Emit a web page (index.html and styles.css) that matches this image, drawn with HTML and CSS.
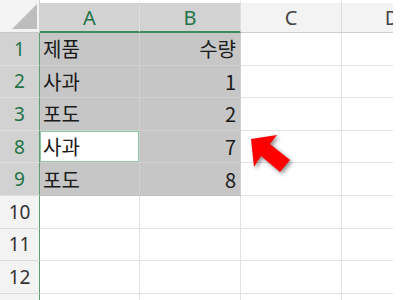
FILE: index.html
```html
<!DOCTYPE html>
<html lang="ko">
<head>
    <meta charset="UTF-8">
    <title>Sheet</title>
    <link rel="stylesheet" href="styles.css">
</head>
<body>

<div class="sheet">
    <div class="corner"></div>
    <div class="ch on">A</div>
    <div class="ch on">B</div>
    <div class="ch">C</div>
    <div class="ch">D</div>

    <div class="rh on">1</div>
    <div class="cell sel">제품</div>
    <div class="cell sel num">수량</div>
    <div class="cell"></div>
    <div class="cell"></div>

    <div class="rh on">2</div>
    <div class="cell sel">사과</div>
    <div class="cell sel num">1</div>
    <div class="cell"></div>
    <div class="cell"></div>

    <div class="rh on">3</div>
    <div class="cell sel">포도</div>
    <div class="cell sel num">2</div>
    <div class="cell"></div>
    <div class="cell"></div>

    <div class="rh on">8</div>
    <div class="cell sel active">사과</div>
    <div class="cell sel num">7</div>
    <div class="cell"></div>
    <div class="cell"></div>

    <div class="rh on">9</div>
    <div class="cell sel last">포도</div>
    <div class="cell sel num last">8</div>
    <div class="cell"></div>
    <div class="cell"></div>

    <div class="rh">10</div>
    <div class="cell"></div>
    <div class="cell"></div>
    <div class="cell"></div>
    <div class="cell"></div>

    <div class="rh">11</div>
    <div class="cell"></div>
    <div class="cell"></div>
    <div class="cell"></div>
    <div class="cell"></div>

    <div class="rh">12</div>
    <div class="cell"></div>
    <div class="cell"></div>
    <div class="cell"></div>
    <div class="cell"></div>

    <div class="rh"></div>
    <div class="cell"></div>
    <div class="cell"></div>
    <div class="cell"></div>
    <div class="cell"></div>
</div>

<!-- pointer arrow next to the filtered rows -->
<svg class="arrow" width="404" height="300" viewBox="0 0 404 300">
    <polygon points="251,139 277,135 270,144 290,160 280,172 261,156 254,167" fill="#ff0000"/>
</svg>

</body>
</html>
```

FILE: styles.css
```css
body {
    margin: 0;
    background-color: #fff;
    font-family: "Noto Sans", "Noto Sans CJK KR", sans-serif;
    position: relative;
    width: 404px;
    height: 300px;
    overflow: hidden;
}

/* the window edge cuts column D off */
.sheet {
    width: 393px;
    height: 300px;
    overflow: hidden;
    display: grid;
    grid-template-columns: 40px 100px 101px 101px 101px;
    grid-template-rows: 33px repeat(9, 32.6px);
}

.corner {
    background-color: #f3f3f3;
    border-right: 1px solid #d0d0d0;
    border-bottom: 1px solid #c8c8c8;
    position: relative;
}

.corner::after {
    content: "";
    position: absolute;
    left: 12px;
    top: 4px;
    width: 25px;
    height: 25px;
    background-color: #bdbdbd;
    clip-path: polygon(100% 0, 100% 100%, 0 100%);
}

.ch {
    background-color: #f3f3f3;
    border-top: 3px solid #fff;
    border-right: 1px solid #dadada;
    border-bottom: 1px solid #cfcfcf;
    color: #444;
    font-size: 20px;
    display: flex;
    align-items: center;
    justify-content: center;
}

.ch.on {
    background-color: #d2d2d2;
    color: #217346;
    border-right-color: #dedede;
    border-bottom: 2px solid #3d8b5f;
}

.rh {
    background-color: #f3f3f3;
    border-right: 1px solid #5a9e78;
    border-bottom: 1px solid #dcdcdc;
    color: #333;
    font-size: 19px;
    display: flex;
    align-items: center;
    justify-content: center;
}

.rh.on {
    background-color: #d2d2d2;
    color: #217346;
    border-bottom-color: #dedede;
}

.cell {
    border-right: 1px solid #e2e2e2;
    border-bottom: 1px solid #e2e2e2;
    font-family: "Noto Sans CJK KR", "Noto Sans", sans-serif;
    font-size: 20px;
    color: #1a1a1a;
    padding: 0 4px 0 3px;
    display: flex;
    align-items: center;
}

.cell.sel {
    background-color: #c6c6c6;
    border-right-color: #d0d0d0;
    border-bottom-color: #d0d0d0;
}

.cell.sel.last {
    border-bottom-color: #bdbdbd;
}

.cell.num {
    justify-content: flex-end;
}

.cell.active {
    background-color: #fff;
    box-shadow: inset 0 0 0 1px #8fc6a4;
}

.arrow {
    position: absolute;
    left: 0;
    top: 0;
    pointer-events: none;
    filter: drop-shadow(2px 2px 2px rgba(0, 0, 0, 0.45));
}
```
